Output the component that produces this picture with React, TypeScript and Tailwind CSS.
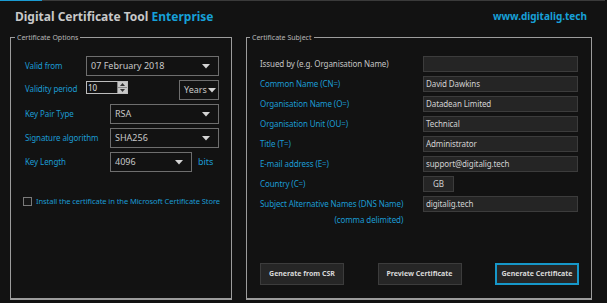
import React from "react";

const F = { fontFamily: '"Noto Sans", "Open Sans", sans-serif' };

function Arrow() {
  return (
    <svg width="8" height="5" viewBox="0 0 8 5" className="shrink-0">
      <path d="M0 0 L8 0 L4 4.5 Z" fill="#d4d4d4" />
    </svg>
  );
}

function Dropdown({ value, w, pr = "pr-[8px]" }: { value: string; w: string; pr?: string }) {
  return (
    <div className={`${w} h-[20px] border border-[#6e6e6e] flex items-center justify-between pl-[4px] ${pr} text-[#c8c8c8] text-[9px]`}>
      <span>{value}</span>
      <Arrow />
    </div>
  );
}

function Label({ children, w }: { children: React.ReactNode; w: string }) {
  return <div className={`${w} shrink-0 text-[#1b9bd2] text-[8px] tracking-[-0.1px] whitespace-nowrap`}>{children}</div>;
}

function Row({ label, value, grey, narrow }: { label: string; value: string; grey?: boolean; narrow?: boolean }) {
  return (
    <div className="flex items-center h-[20px]">
      <div className={`w-[163px] shrink-0 text-[8px] tracking-[-0.1px] whitespace-nowrap ${grey ? "text-[#c4c4c4]" : "text-[#1b9bd2]"}`}>{label}</div>
      <div
        className={`${narrow ? "w-[31px] justify-center" : "w-[155px] pl-[2px]"} h-[16px] flex items-center bg-[#252525] border border-[#3c3c3c] text-[#d2d2d2] text-[8px] tracking-[-0.1px]`}
      >
        {value}
      </div>
    </div>
  );
}

function Btn({ children, primary }: { children: React.ReactNode; primary?: boolean }) {
  return (
    <div
      className={`w-[84px] h-[22px] flex items-center justify-center bg-[#262626] text-[#d8d8d8] text-[7px] font-bold ${
        primary ? "border-2 border-[#1697c9]" : "border border-[#3c3c3c]"
      }`}
    >
      {children}
    </div>
  );
}

export default function App() {
  return (
    <div className="w-[607px] h-[303px] bg-[#121212] overflow-hidden" style={F}>
      <div className="flex h-[1px]">
        <div className="w-[42px] bg-[#1a9bd2]" />
        <div className="w-[563px] bg-[#3a3a3a]" />
      </div>
      <div className="h-[31px] flex items-center justify-between pl-[15px] pr-[20px]">
        <div className="text-[12px] font-bold text-[#c8c8c8] mt-[1px]">
          Digital Certificate Tool <span className="text-[#16a0d8]">Enterprise</span>
        </div>
        <div className="text-[10px] font-bold text-[#17a0d8]">www.digitalig.tech</div>
      </div>
      <div className="flex pl-[10px] gap-[14px]">
        <fieldset className="w-[222px] min-w-0 shrink-0 h-[268px] border border-b-2 border-[#9c9c9c] pl-[14px] pr-[12px]">
          <legend className="ml-[-10px] px-[2px] text-[7px] leading-[11px] text-[#b8b8b8]">Certificate Options</legend>
          <div className="flex flex-col gap-[4px] pt-[13px]">
            <div className="flex items-center h-[20px]">
              <Label w="w-[61px]">Valid from</Label>
              <Dropdown value="07 February 2018" w="w-[133px]" />
            </div>
            <div className="flex items-start h-[20px]">
              <Label w="w-[61px] mt-[3px]">Validity period</Label>
              <div className="mt-[1px] w-[42px] h-[13px] border border-[#bdbdbd] flex">
                <div className="flex-1 text-[8px] leading-[11px] text-[#e0e0e0] pl-[1px]">10</div>
                <div className="w-[10px] flex flex-col bg-[#c8c8c8] border-l border-[#888]">
                  <div className="flex-1 flex items-center justify-center border-b border-[#888]">
                    <svg width="5" height="3" viewBox="0 0 5 3"><path d="M0 3 L5 3 L2.5 0 Z" fill="#333" /></svg>
                  </div>
                  <div className="flex-1 flex items-center justify-center">
                    <svg width="5" height="3" viewBox="0 0 5 3"><path d="M0 0 L5 0 L2.5 3 Z" fill="#333" /></svg>
                  </div>
                </div>
              </div>
              <div className="ml-auto">
                <Dropdown value="Years" w="w-[40px]" pr="pr-[2px]" />
              </div>
            </div>
            <div className="flex items-center h-[20px]">
              <Label w="w-[85px]">Key Pair Type</Label>
              <Dropdown value="RSA" w="w-[109px]" />
            </div>
            <div className="flex items-center h-[20px]">
              <Label w="w-[85px]">Signature algorithm</Label>
              <Dropdown value="SHA256" w="w-[109px]" />
            </div>
            <div className="flex items-center h-[20px]">
              <Label w="w-[85px]">Key Length</Label>
              <Dropdown value="4096" w="w-[82px]" />
              <span className="ml-[6px] text-[#1b9bd2] text-[9px]">bits</span>
            </div>
          </div>
          <div className="flex items-center mt-[25px] ml-[-2px] h-[9px]">
            <div className="w-[9px] h-[9px] shrink-0 border border-[#7a7a7a] bg-[#161616]" />
            <span className="ml-[4px] text-[7.6px] tracking-[-0.1px] whitespace-nowrap text-[#1b9bd2]">
              Install the certificate in the Microsoft Certificate Store
            </span>
          </div>
        </fieldset>
        <fieldset className="w-[346px] min-w-0 shrink-0 h-[268px] border border-b-2 border-[#9c9c9c] pl-[13px] pr-[12px]">
          <legend className="ml-[-10px] px-[2px] text-[7px] leading-[11px] text-[#b8b8b8]">Certificate Subject</legend>
          <div className="flex flex-col pt-[11px]">
            <Row label="Issued by (e.g. Organisation Name)" value="" grey />
            <Row label="Common Name (CN=)" value="David Dawkins" />
            <Row label="Organisation Name (O=)" value="Datadean Limited" />
            <Row label="Organisation Unit (OU=)" value="Technical" />
            <Row label="Title (T=)" value="Administrator" />
            <Row label="E-mail address (E=)" value="support@digitalig.tech" />
            <Row label="Country (C=)" value="GB" narrow />
            <div className="flex items-start h-[32px] pt-[2px]">
              <div className="w-[163px] shrink-0 flex">
                <div className="flex flex-col items-end text-[8px] tracking-[-0.1px] leading-[16px] text-[#1b9bd2] whitespace-nowrap">
                  <span>Subject Alternative Names (DNS Name)</span>
                  <span>(comma delimited)</span>
                </div>
              </div>
              <div className="w-[155px] h-[16px] pl-[2px] flex items-center bg-[#252525] border border-[#3c3c3c] text-[#d2d2d2] text-[8px] tracking-[-0.1px]">
                digitalig.tech
              </div>
            </div>
          </div>
          <div className="flex justify-between mt-[37px]">
            <Btn>Generate from CSR</Btn>
            <Btn>Preview Certificate</Btn>
            <Btn primary>Generate Certificate</Btn>
          </div>
        </fieldset>
      </div>
    </div>
  );
}
